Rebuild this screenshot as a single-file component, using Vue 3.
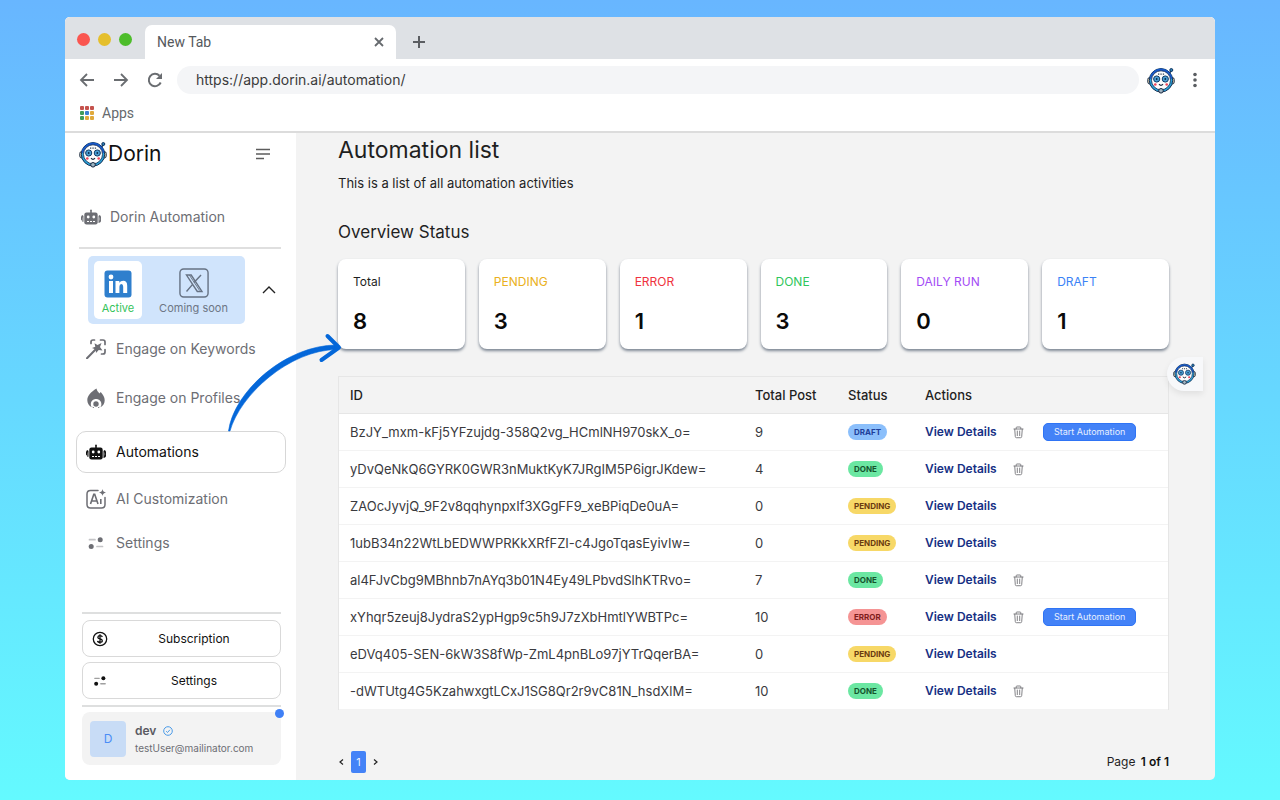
<script setup>
const menu = [
  { label: 'Engage on Keywords', icon: 'wand' },
  { label: 'Engage on Profiles', icon: 'fire' },
  { label: 'Automations', icon: 'bot', active: true },
  { label: 'AI Customization', icon: 'ai' },
  { label: 'Settings', icon: 'sliders' },
]

const stats = [
  { label: 'Total', value: 8, tone: 'total' },
  { label: 'PENDING', value: 3, tone: 'pending' },
  { label: 'ERROR', value: 1, tone: 'error' },
  { label: 'DONE', value: 3, tone: 'done' },
  { label: 'DAILY RUN', value: 0, tone: 'daily' },
  { label: 'DRAFT', value: 1, tone: 'draft' },
]

const rows = [
  { id: 'BzJY_mxm-kFj5YFzujdg-358Q2vg_HCmlNH970skX_o=', posts: 9, status: 'DRAFT', trash: true, start: true },
  { id: 'yDvQeNkQ6GYRK0GWR3nMuktKyK7JRgIM5P6igrJKdew=', posts: 4, status: 'DONE', trash: true },
  { id: 'ZAOcJyvjQ_9F2v8qqhynpxIf3XGgFF9_xeBPiqDe0uA=', posts: 0, status: 'PENDING' },
  { id: '1ubB34n22WtLbEDWWPRKkXRfFZI-c4JgoTqasEyivIw=', posts: 0, status: 'PENDING' },
  { id: 'al4FJvCbg9MBhnb7nAYq3b01N4Ey49LPbvdSlhKTRvo=', posts: 7, status: 'DONE', trash: true },
  { id: 'xYhqr5zeuj8JydraS2ypHgp9c5h9J7zXbHmtlYWBTPc=', posts: 10, status: 'ERROR', trash: true, start: true },
  { id: 'eDVq405-SEN-6kW3S8fWp-ZmL4pnBLo97jYTrQqerBA=', posts: 0, status: 'PENDING' },
  { id: '-dWTUtg4G5KzahwxgtLCxJ1SG8Qr2r9vC81N_hsdXlM=', posts: 10, status: 'DONE', trash: true },
]

const appDots = ['#c5524d', '#c5524d', '#c5524d', '#3f9a5a', '#3b7fd0', '#e0a93b', '#3f9a5a', '#e0a93b', '#e0a93b']
</script>

<template>
  <div class="desktop">
    <svg class="sprite" aria-hidden="true">
      <symbol id="i-mascot" viewBox="0 0 28 28">
        <path d="M22 7.500L24.500 4.500" stroke="#12355f" stroke-width="1.600" />
        <circle cx="24.300" cy="4" r="1.500" fill="#2c83b8" stroke="#12355f" />
        <rect x=".8" y="11.500" width="4" height="6.500" rx="2" fill="#f3e5c0" stroke="#1b2b42" />
        <rect x="23.200" y="11.500" width="4" height="6.500" rx="2" fill="#f3e5c0" stroke="#1b2b42" />
        <circle cx="14" cy="14.300" r="11.700" fill="#2aa5dc" stroke="#132c50" />
        <path d="M2.700 12.500a11.400 11.400 0 0 1 22.600 0l-3 1a8.500 8.500 0 0 0-16.600 0z" fill="#1757c8" />
        <circle cx="14" cy="14.300" r="9.500" fill="#fdfdfd" stroke="#132c50" stroke-width=".8" />
        <path d="M11 8.200h1.300M13.400 8.200h1.300M15.800 8.200h1.300" stroke="#345" stroke-width="1.200" />
        <circle cx="9.700" cy="13" r="3.100" fill="#4a9fd4" stroke="#123c66" />
        <circle cx="18.300" cy="13" r="3.100" fill="#4a9fd4" stroke="#123c66" />
        <circle cx="9.700" cy="13" r=".9" fill="#0b2948" />
        <circle cx="18.300" cy="13" r=".9" fill="#0b2948" />
        <circle cx="8.300" cy="18.500" r="1.300" fill="#ef4458" />
        <circle cx="19.700" cy="18.500" r="1.300" fill="#ef4458" />
        <path d="M12 18.200q2 2.200 4 0" fill="none" stroke="#1b2b42" stroke-width="1.200" />
        <circle cx="14" cy="24.800" r="2.300" fill="#9fb4c2" stroke="#1b2b42" />
      </symbol>
      <symbol id="i-bot" viewBox="0 0 20 20">
        <rect x="9.200" y="2.500" width="1.600" height="4" rx=".8" fill="currentColor" />
        <rect x="3.300" y="5.500" width="13.400" height="12" rx="2.200" fill="currentColor" />
        <path d="M1.900 8.700Q.2 9 .3 13.200M18.100 8.700v6.500q1.800-.6 1.600-3.500-.1-2.600-1.600-3M1.900 8.700v6" fill="none" stroke="currentColor" stroke-width="1.200" />
        <circle cx="7.200" cy="10" r="1.400" fill="#fff" />
        <circle cx="12.800" cy="10" r="1.400" fill="#fff" />
        <path d="M6 14.500h2M9 14.500h2M12 14.500h2" stroke="#fff" stroke-width="1.100" />
      </symbol>
      <symbol id="i-wand" viewBox="0 0 20 20">
        <path d="M5 4.500V3q0-2 2-2h1.500M14.500 1H17q2 0 2 2v2.500M19 10.500V13q0 2-2 2h-1.500" fill="none" stroke="currentColor" stroke-width="1.700" stroke-linecap="round" />
        <path d="M1 19.200L10.500 9.500" stroke="currentColor" stroke-width="2" stroke-linecap="round" />
        <path d="M8.500 4.200L11.500 6 15.500 4 14 8l2.500 3.500-3.800-.6L10 14l-.3-3.600L6 9l3.300-1.200z" fill="currentColor" />
      </symbol>
      <symbol id="i-fire" viewBox="0 0 20 20">
        <path fill="currentColor" d="M10.500.5c.4 2 1.500 3.500 3 5l1.200-1.600c2.300 2.500 4 5.200 4 8.300 0 3.200-1.600 5.500-4.200 7 .6-1 .9-2 .9-3 0-3-2.300-5.200-5.300-5.200s-5.300 2.200-5.300 5.200c0 1.100.3 2 .8 3C2.900 17.800 1.300 15.300 1.300 12c0-4.300 3.500-8 9.200-11.500z" />
        <circle cx="10" cy="16" r="2.700" fill="currentColor" />
        <path d="M6.400 18.800q.7 1 1.600 1M13.600 18.800q-.7 1-1.600 1" fill="none" stroke="currentColor" />
      </symbol>
      <symbol id="i-ai" viewBox="0 0 20 20">
        <path d="M12 1.500H4.500Q1 1.500 1 5v10.500Q1 19 4.500 19H15.500Q19 19 19 15.500V8.500" fill="none" stroke="currentColor" stroke-width="1.500" stroke-linecap="round" />
        <path d="M4.500 15L7.800 5.200h.9L12 15M5.500 12h5.500M14.800 10v5" fill="none" stroke="currentColor" stroke-width="1.600" />
        <path d="M16.500 0q.3 3 3.500 3.500-3.200.5-3.500 3.500-.3-3-3.500-3.500 3.200-.5 3.500-3.500z" fill="currentColor" />
      </symbol>
      <symbol id="i-sliders" viewBox="0 0 20 20">
        <path d="M3.500 6.700h5.500M11 13.500h5.500" stroke="currentColor" stroke-width="1.700" stroke-linecap="round" opacity=".4" />
        <circle cx="14.200" cy="6.700" r="2.500" fill="currentColor" />
        <circle cx="5.200" cy="13.500" r="2.500" fill="currentColor" />
      </symbol>
      <symbol id="i-trash" viewBox="0 0 12 14">
        <path d="M1 3.200h10M3.500 3V1.800q0-.8.800-.8h3.400q.8 0 .8.800V3M1.900 3.400l.6 8q.1 1.300 1.300 1.300h4.400q1.200 0 1.300-1.300l.6-8M4.700 5.400v5M7.300 5.400v5" fill="none" stroke="currentColor" stroke-width="1" stroke-linecap="round" />
      </symbol>
    </svg>

    <div class="window">
      <header class="chrome">
        <div class="tabstrip">
          <div class="lights"><i class="red"></i><i class="yellow"></i><i class="green"></i></div>
          <div class="tab">
            <span>New Tab</span>
            <button type="button" class="plain" aria-label="Close tab">
              <svg width="10" height="10" viewBox="0 0 10 10"><path d="M1 1l8 8M9 1L1 9" stroke="#666a6e" stroke-width="1.800" /></svg>
            </button>
          </div>
          <button type="button" class="plain newtab" aria-label="Open tab">
            <svg width="14" height="14" viewBox="0 0 14 14"><path d="M7 1v12M1 7h12" stroke="#5b5e62" stroke-width="2" /></svg>
          </button>
        </div>
        <div class="toolbar">
          <button type="button" class="plain" aria-label="Back">
            <svg width="16" height="16" viewBox="0 0 16 16"><path d="M15 8H2M8 2L2 8l6 6" fill="none" stroke="#6a6d71" stroke-width="1.800" /></svg>
          </button>
          <button type="button" class="plain" aria-label="Forward">
            <svg width="16" height="16" viewBox="0 0 16 16"><path d="M1 8h13M8 2l6 6-6 6" fill="none" stroke="#6a6d71" stroke-width="1.800" /></svg>
          </button>
          <button type="button" class="plain" aria-label="Reload">
            <svg width="16" height="16" viewBox="0 0 16 16"><path d="M13.700 10.500A6.200 6.200 0 1 1 12.500 3.700" fill="none" stroke="#6a6d71" stroke-width="2" /><path d="M15 1v6H9z" fill="#6a6d71" /></svg>
          </button>
          <input class="url" type="text" aria-label="Address" value="https://app.dorin.ai/automation/" />
          <svg width="28" height="28" class="ext"><use href="#i-mascot" /></svg>
          <button type="button" class="plain" aria-label="Browser menu">
            <svg width="6" height="16" viewBox="0 0 6 16"><g fill="#5b5e62"><circle cx="3" cy="2.500" r="1.800" /><circle cx="3" cy="8" r="1.800" /><circle cx="3" cy="13.500" r="1.800" /></g></svg>
          </button>
        </div>
        <div class="bookmarks">
          <svg width="16" height="16" viewBox="0 0 16 16">
            <rect v-for="(c, i) in appDots" :key="i" :x="1 + (i % 3) * 5" :y="1 + Math.floor(i / 3) * 5" width="4" height="4" rx="1" :fill="c" />
          </svg>
          <span>Apps</span>
        </div>
      </header>

      <div class="page">
        <aside class="sidebar">
          <div class="brand">
            <svg width="28" height="28"><use href="#i-mascot" /></svg>
            <span>Dorin</span>
            <button type="button" class="plain burger" aria-label="Collapse sidebar">
              <svg width="14" height="12" viewBox="0 0 14 12"><path d="M0 1.500h14M0 6h14M0 10.500h8" stroke="#5c5c5c" stroke-width="1.500" /></svg>
            </button>
          </div>
          <a href="#" class="section">
            <svg width="20" height="20"><use href="#i-bot" /></svg>
            <span>Dorin Automation</span>
          </a>
          <hr class="rule" />
          <div class="network">
            <div class="switch">
              <button type="button" class="net on">
                <svg width="28" height="28" viewBox="0 0 28 28">
                  <rect x=".5" y=".5" width="27" height="27" rx="3" fill="#2f7fcd" />
                  <circle cx="7" cy="7" r="2.400" fill="#fff" />
                  <path d="M5 11h4v12H5zM11.500 11h3.800v1.700q1.200-2 3.900-2 4 0 4 5V23h-4v-6.300q0-2.600-1.800-2.600-2 0-2 2.600V23h-3.900z" fill="#fff" />
                </svg>
                <span>Active</span>
              </button>
              <button type="button" class="net">
                <svg width="30" height="30" viewBox="0 0 32 32" fill="none" stroke="#667283">
                  <rect x="1" y="1" width="30" height="30" rx="4" stroke-width="1.500" />
                  <path d="M8 7.500h5L24.500 25h-5zM23.500 7.500l-7.500 8M14.500 17.500L8 25" stroke-width="1.500" />
                  <path d="M11 7.500L22 24" />
                </svg>
                <span>Coming soon</span>
              </button>
            </div>
            <button type="button" class="plain" aria-label="Collapse section">
              <svg width="14" height="8" viewBox="0 0 14 8"><path d="M1 7l6-6 6 6" fill="none" stroke="#222" stroke-width="1.400" /></svg>
            </button>
          </div>
          <nav class="menu">
            <a v-for="m in menu" :key="m.label" href="#" :class="{ active: m.active }">
              <svg width="20" height="20"><use :href="'#i-' + m.icon" /></svg>
              <span>{{ m.label }}</span>
            </a>
          </nav>
          <div class="bottom">
            <button type="button" class="wide">
              <svg width="16" height="16" viewBox="0 0 16 16" fill="none" stroke="#111" stroke-width="1.300"><circle cx="8" cy="8" r="6.700" /><path d="M10.300 6q-.3-1.300-2.300-1.300T5.800 6.300q0 1.300 2.200 1.600t2.300 1.800q0 1.600-2.300 1.600T5.600 9.900M8 3.300v9.400" /></svg>
              <span>Subscription</span>
            </button>
            <button type="button" class="wide">
              <svg width="16" height="16"><use href="#i-sliders" /></svg>
              <span>Settings</span>
            </button>
          </div>
          <div class="user">
            <div class="avatar">D</div>
            <div class="who">
              <div class="name">
                dev
                <svg width="10" height="10" viewBox="0 0 10 10" fill="none" stroke="#4b9be8"><circle cx="5" cy="5" r="4.300" /><path d="M3.200 5.200l1.300 1.300 2.400-2.700" /></svg>
              </div>
              <div class="mail">testUser@mailinator.com</div>
            </div>
            <i class="dot"></i>
          </div>
        </aside>

        <main class="main">
          <h1>Automation list</h1>
          <p class="lead">This is a list of all automation activities</p>
          <h2>Overview Status</h2>
          <section class="cards">
            <article v-for="s in stats" :key="s.label" class="card">
              <div class="label" :class="s.tone">{{ s.label }}</div>
              <div class="value">{{ s.value }}</div>
            </article>
          </section>
          <table class="list">
            <colgroup><col class="c-id" /><col class="c-post" /><col class="c-status" /><col /></colgroup>
            <thead>
              <tr><th>ID</th><th>Total Post</th><th>Status</th><th>Actions</th></tr>
            </thead>
            <tbody>
              <tr v-for="r in rows" :key="r.id">
                <td>{{ r.id }}</td>
                <td>{{ r.posts }}</td>
                <td><span class="badge" :class="'b-' + r.status.toLowerCase()">{{ r.status }}</span></td>
                <td>
                  <div class="actions">
                    <a href="#">View Details</a>
                    <button v-if="r.trash" type="button" class="plain" aria-label="Delete">
                      <svg width="11" height="13" class="trash"><use href="#i-trash" /></svg>
                    </button>
                    <button v-if="r.start" type="button" class="start">Start Automation</button>
                  </div>
                </td>
              </tr>
            </tbody>
          </table>
          <footer class="pager">
            <div class="pages">
              <button type="button" class="plain" aria-label="Previous page">
                <svg width="6" height="8" viewBox="0 0 6 8"><path d="M5 1.500L2 4l3 2.500" fill="none" stroke="#222" stroke-width="1.200" /></svg>
              </button>
              <button type="button" class="current">1</button>
              <button type="button" class="plain" aria-label="Next page">
                <svg width="6" height="8" viewBox="0 0 6 8"><path d="M1 1.500l3 2.500-3 2.500" fill="none" stroke="#222" stroke-width="1.200" /></svg>
              </button>
            </div>
            <div>Page <b>1 of 1</b></div>
          </footer>
        </main>

        <button type="button" class="assistant" aria-label="Open assistant">
          <svg width="23" height="23"><use href="#i-mascot" /></svg>
        </button>
        <svg class="pointer" width="120" height="104" viewBox="0 0 120 104" aria-hidden="true">
          <path d="M2.500 100C8 60 60 14 111 14v4.500C63 19 14 64 4 100z" fill="#0467d9" stroke="#0467d9" stroke-width=".6" stroke-linejoin="round" />
          <path d="M101.500 5L113 16.500 95.500 29" fill="none" stroke="#0467d9" stroke-width="4" stroke-linecap="round" stroke-linejoin="round" />
        </svg>
      </div>
    </div>
  </div>
</template>

<style>
body { margin: 0; }
</style>

<style scoped>
* { box-sizing: border-box; }
.desktop {
  min-height: 100vh;
  padding: 17px 65px 20px;
  display: flex;
  background: linear-gradient(#68b6ff, #64faff);
  font-family: Inter, "Noto Sans", sans-serif;
  font-size: 13px;
  line-height: 20px;
  color: #1f1f1f;
}
.sprite { position: absolute; width: 0; height: 0; }
svg { display: block; flex: none; }
button { font-family: inherit; cursor: pointer; }
a { text-decoration: none; color: inherit; }
.plain { border: 0; padding: 0; background: none; color: inherit; display: flex; }
.window {
  flex: 1;
  min-width: 0;
  display: flex;
  flex-direction: column;
  border-radius: 5px;
  overflow: hidden;
  background: #f3f3f3;
}
.chrome { background: #fff; border-bottom: 2px solid #dcdcdc; }
.tabstrip { height: 42px; background: #dee1e5; display: flex; align-items: center; }
.lights { display: flex; gap: 8px; padding: 2px 13px 0 12px; }
.lights i { width: 13px; height: 13px; border-radius: 50%; }
.red { background: #fa5650; }
.yellow { background: #e5bf2c; }
.green { background: #4dbd2b; }
.tab {
  align-self: flex-end;
  width: 251px;
  height: 34px;
  padding: 0 12px;
  border-radius: 7px 7px 0 0;
  background: #fff;
  display: flex;
  align-items: center;
  justify-content: space-between;
  font-family: Roboto, sans-serif;
  font-size: 14px;
  color: #55585c;
}
.newtab { margin: 8px 0 0 16px; }
.toolbar { display: flex; align-items: center; height: 41px; padding: 0 17px 0 14px; gap: 18px; }
.url {
  flex: 1;
  min-width: 0;
  height: 28px;
  margin-left: -4px;
  border: 0;
  border-radius: 14px;
  padding: 0 19px;
  background: #f4f5f7;
  font-family: Inter, sans-serif;
  font-size: 14px;
  color: #3b3b3b;
}
.ext { margin-left: -10px; }
.toolbar .ext + .plain { margin-left: -1px; }
.bookmarks { display: flex; align-items: center; gap: 7px; height: 31px; padding: 0 14px 6px; font-family: Roboto, sans-serif; font-size: 14px; color: #66696d; }

.page { flex: 1; display: flex; position: relative; }
.sidebar { width: 231px; flex: none; background: #fff; display: flex; flex-direction: column; padding-bottom: 15px; color: #6d6e74; }
.brand { display: flex; align-items: center; gap: 1px; padding: 7px 26px 0 14px; font-size: 21px; line-height: 28px; color: #111; }
.burger { margin-left: auto; }
.section { display: flex; align-items: center; gap: 9px; margin: 25px 16px 0; height: 48px; font-size: 14px; }
.rule { border: 0; border-top: 2px solid #dfdfdf; width: 202px; margin: 6px 0 7px 14px; }
.network { display: flex; align-items: center; gap: 17px; padding-left: 23px; }
.switch { display: flex; width: 157px; height: 68px; padding: 5px 0 5px 6px; border-radius: 5px; background: #d0e4fc; }
.net { border: 0; border-radius: 5px; background: none; padding: 0 0 2px; display: flex; flex-direction: column; align-items: center; justify-content: flex-end; gap: 1px; font-size: 11px; line-height: 18px; color: #6d7685; flex: 1; white-space: nowrap; }
.net.on { background: #fff; color: #35c35a; flex: 0 0 48px; }
.menu { display: flex; flex-direction: column; padding: 3px 10px 0 11px; font-size: 14px; }
.menu a { display: flex; align-items: center; gap: 10px; height: 44px; padding: 0 10px; }
.menu a:nth-child(2) { margin: 5px 0 11px; }
.menu .active { height: 42px; margin-bottom: 4px; border: 1px solid #d7d7d7; border-radius: 10px; color: #111; padding: 0 9px; }
.bottom { margin: auto 15px 0 17px; padding: 6px 0; border-top: 2px solid #dedfdf; border-bottom: 2px solid #dedfdf; display: flex; flex-direction: column; gap: 5px; }
.wide { height: 37px; padding: 0 9px; border: 1px solid #d9d9d9; border-radius: 8px; background: #fff; display: flex; align-items: center; font-size: 12px; color: #111; }
.wide span { flex: 1; padding-left: 9px; }
.user { position: relative; margin: 5px 15px 0 17px; height: 53px; padding: 0 8px; border-radius: 8px; background: #f3f3f3; display: flex; align-items: center; gap: 9px; }
.avatar { width: 36px; height: 36px; border-radius: 4px; background: #c8dcf6; color: #4a8df6; display: grid; place-items: center; font-size: 12px; }
.name { display: flex; align-items: center; gap: 7px; font-size: 12px; font-weight: 600; line-height: 18px; color: #5a5a62; }
.mail { font-size: 10px; line-height: 16px; }
.dot { position: absolute; top: -3px; right: -3px; width: 9px; height: 9px; border-radius: 50%; background: #3f80f6; }

.main { flex: 1; min-width: 0; padding: 0 46px 0 42px; display: flex; flex-direction: column; }
h1 { margin: 0; font-size: 23px; line-height: 34px; font-weight: 400; }
.lead { margin: 6px 0 0; }
h2 { margin: 26px 0 0; font-size: 17px; line-height: 26px; font-weight: 400; }
.cards { display: grid; grid-template-columns: repeat(6, 1fr); gap: 14px; margin-top: 14px; }
.card { height: 90px; padding: 13px 15px; border-radius: 8px; background: #fff; box-shadow: 0 2px 3px #7d8794; }
.label { font-size: 12px; }
.value { margin-top: 14px; font-size: 22px; line-height: 30px; font-weight: 600; color: #0a0a0a; }
.pending { color: #eab020; }
.error { color: #ef3340; }
.done { color: #2fc65c; }
.daily { color: #a34bf5; }
.draft { color: #3b82f6; }
.list { margin-top: 27px; width: 100%; table-layout: fixed; border-collapse: separate; border-spacing: 0; border: solid #e6e6e6; border-width: 1px 1px 0; }
.c-id { width: 405px; }
.c-post { width: 93px; }
.c-status { width: 77px; }
th, td { height: 37px; padding: 0 0 0 11px; text-align: left; border-bottom: 1px solid #f3f3f3; white-space: nowrap; }
th { font-weight: 500; border-bottom-color: #e6e6e6; }
td { background: #fff; color: #3a3a3e; }
.badge { display: block; width: max-content; padding: 0 6px; border-radius: 8px; font-size: 8px; line-height: 16px; font-weight: 700; }
.b-draft { background: #8bbffb; color: #1e3f9a; }
.b-done { background: #6be7a2; color: #14532d; }
.b-pending { background: #f7d867; color: #6b3b10; }
.b-error { background: #f59494; color: #7f1d1d; }
.actions { display: flex; align-items: center; font-size: 12px; font-weight: 600; color: #163084; }
.actions a { width: 88px; }
.trash { color: #77777c; }
.start { margin-left: 19px; height: 18px; padding: 0 10px; border: 1px solid #2f74f5; border-radius: 5px; background: #4382f7; color: #e8f0ff; font-size: 9px; line-height: 16px; }
.pager { display: flex; align-items: center; justify-content: space-between; margin-top: auto; padding-bottom: 7px; font-size: 12px; }
.pager b { margin-left: 2px; font-weight: 600; color: #111; }
.pages { display: flex; align-items: center; gap: 7px; }
.current { width: 15px; height: 22px; padding: 0; border: 0; border-radius: 2px; background: #4382f7; color: #e8f0ff; font-size: 11px; }

.assistant { position: absolute; top: 224px; right: 12px; width: 36px; height: 34px; border: 0; border-radius: 17px 0 0 17px; padding: 0 0 2px 6px; background: #f7f8fa; box-shadow: 0 3px 6px rgba(0, 0, 0, 0.08); display: flex; align-items: center; }
.pointer { position: absolute; left: 161px; top: 198px; pointer-events: none; }
</style>
